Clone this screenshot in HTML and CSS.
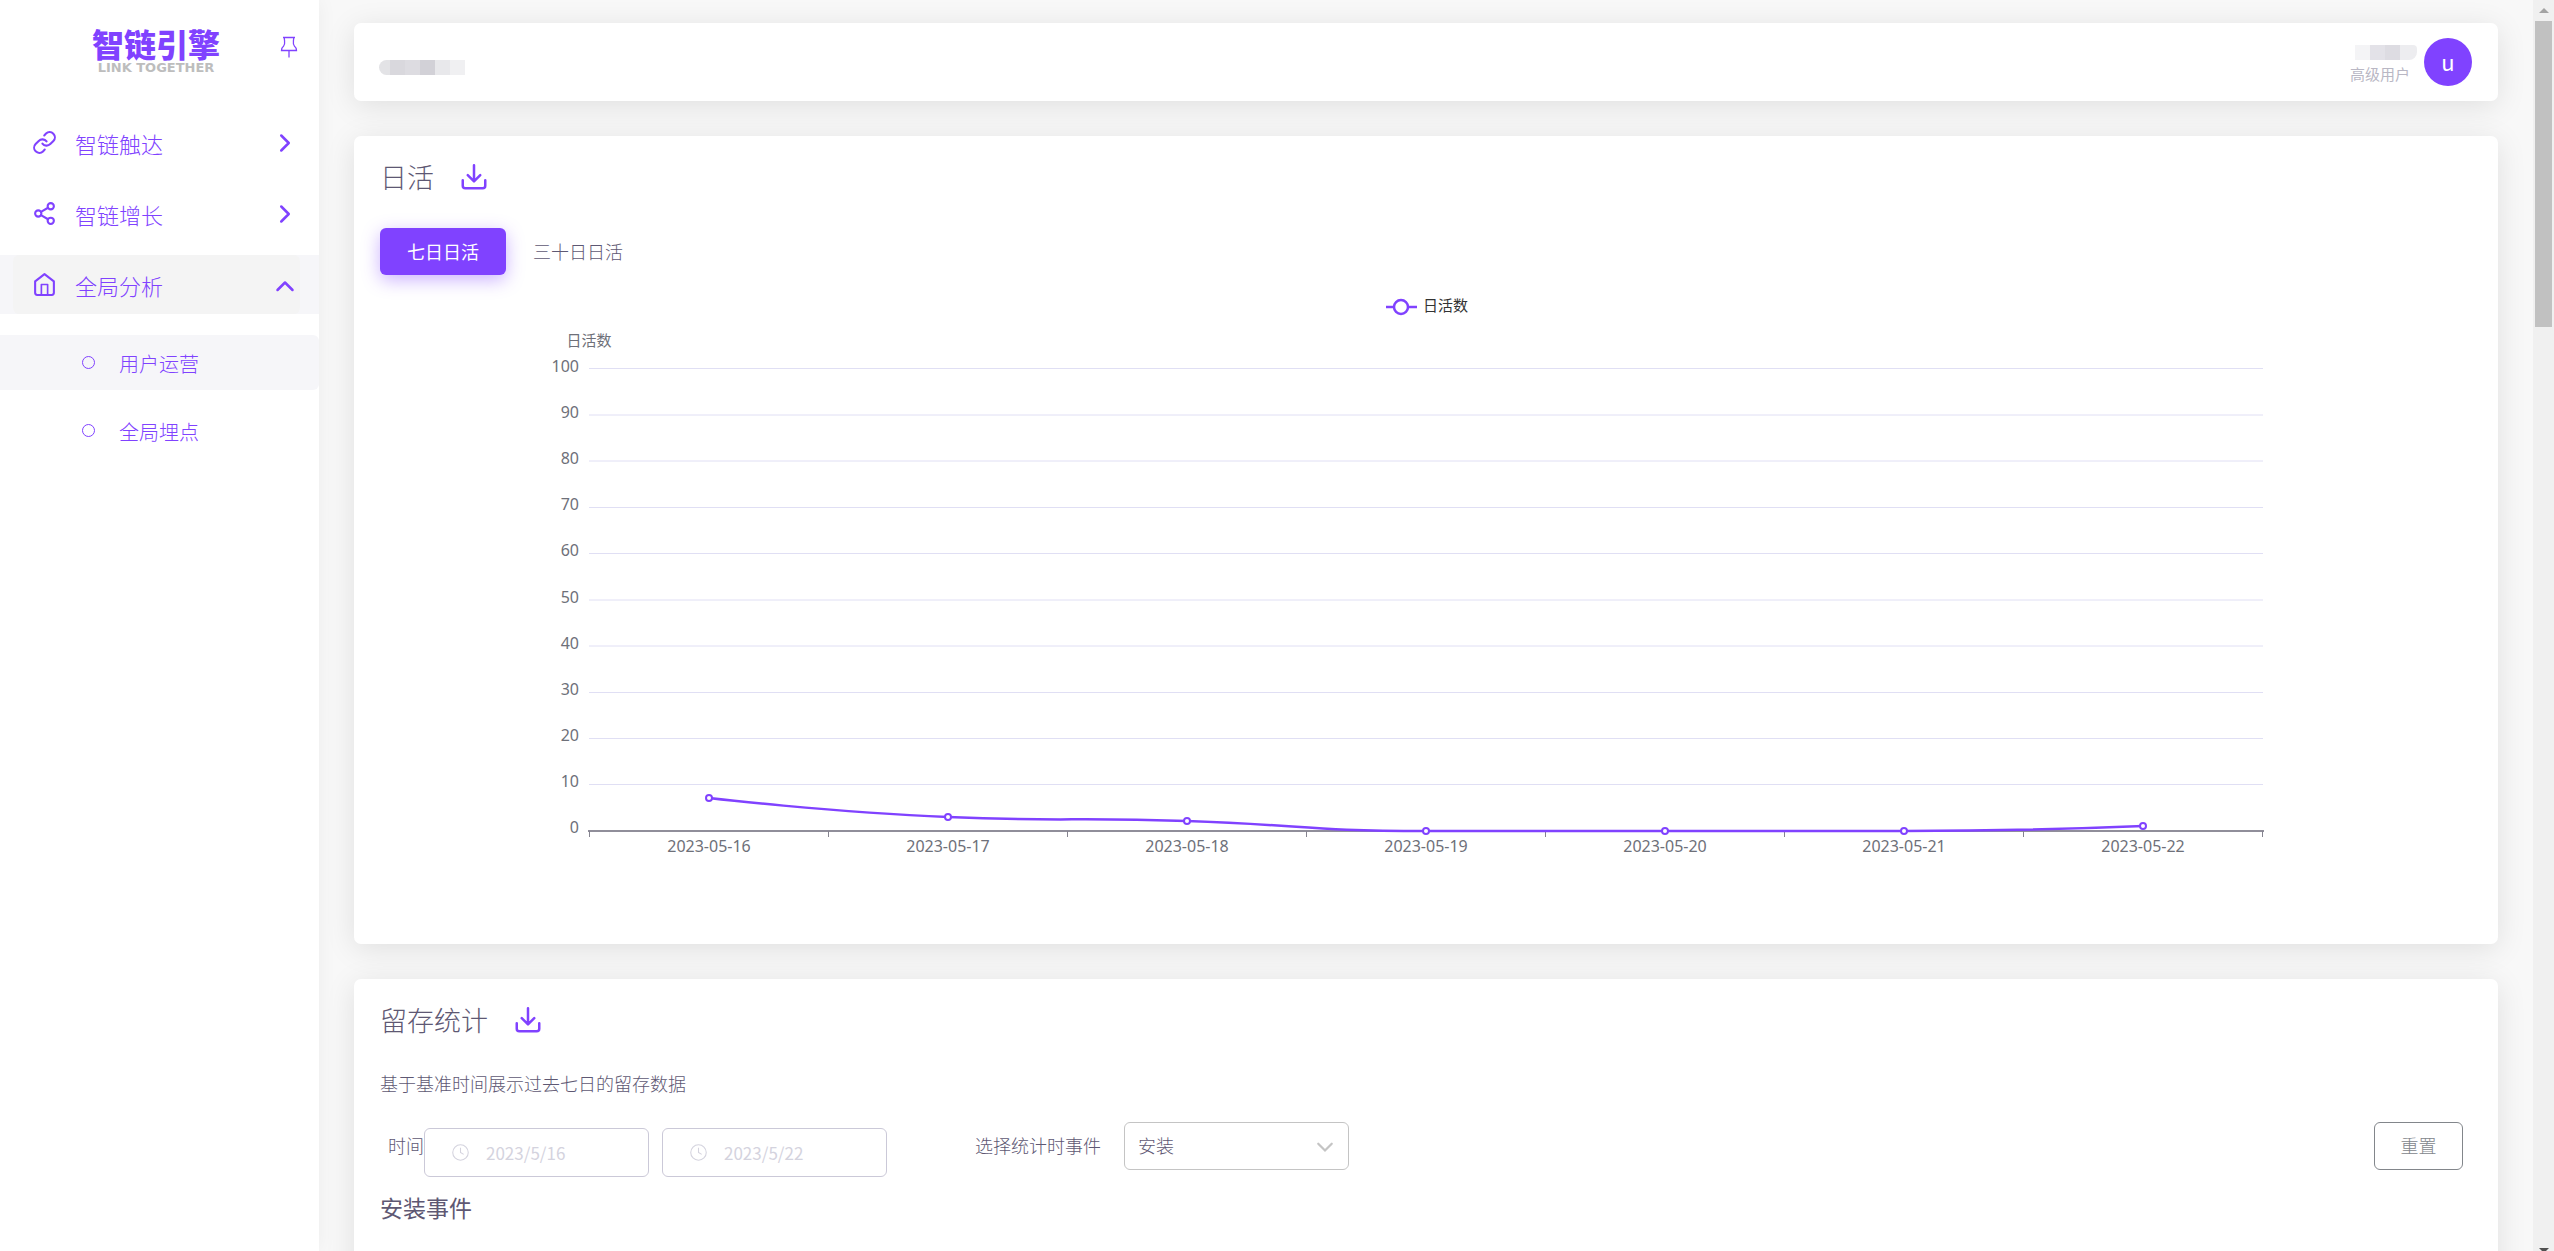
FILE: index.html
```html
<!DOCTYPE html>
<html lang="zh-CN">
<head>
<meta charset="utf-8">
<meta name="viewport" content="width=device-width, initial-scale=1">
<title>智链引擎</title>
<link rel="stylesheet" href="styles.css">
</head>
<body>
<div class="app">
  <aside class="sidebar">
    <div class="brand">
      <a class="logo" href="#"><span class="logo-name">智链引擎</span><span class="logo-sub">LINK TOGETHER</span></a>
      <button class="pin" type="button" aria-label="固定菜单">
        <svg viewBox="0 0 18 22" width="18" height="22" fill="none" stroke="currentColor" stroke-width="1.3"><path d="M3 1.500h12M4.300 1.500C4.300 5.500 5.800 8 3.500 10.200C2.200 11.200 1.500 12 1.500 14.500H16.500C16.500 12 15.800 11.200 14.500 10.200C12.200 8 13.700 5.500 13.700 1.500M9 14.500v7"/></svg>
      </button>
    </div>
    <nav class="menu">
      <a class="menu-row" href="#"><span class="menu-item">
        <svg class="icon" viewBox="0 0 24 24"><path d="M10 13a5 5 0 0 0 7.540.540l3-3a5 5 0 0 0-7.070-7.070l-1.720 1.710"/><path d="M14 11a5 5 0 0 0-7.540-.540l-3 3a5 5 0 0 0 7.070 7.070l1.710-1.710"/></svg>
        <span class="menu-label">智链触达</span>
        <svg class="chevron" viewBox="0 0 24 24"><path d="M9 6l6 6-6 6"/></svg></span></a>
      <a class="menu-row" href="#"><span class="menu-item">
        <svg class="icon" viewBox="0 0 24 24"><circle cx="18" cy="5" r="3"/><circle cx="6" cy="12" r="3"/><circle cx="18" cy="19" r="3"/><path d="M8.600 13.500l6.800 4M15.400 6.500l-6.800 4"/></svg>
        <span class="menu-label">智链增长</span>
        <svg class="chevron" viewBox="0 0 24 24"><path d="M9 6l6 6-6 6"/></svg></span></a>
      <a class="menu-row open" href="#"><span class="menu-item">
        <svg class="icon" viewBox="0 0 24 24"><path d="M3 9l9-7 9 7v11a2 2 0 0 1-2 2H5a2 2 0 0 1-2-2z"/><path d="M9 22V12h6v10" stroke-width="1.600"/></svg>
        <span class="menu-label">全局分析</span>
        <svg class="chevron" viewBox="0 0 24 24"><path d="M6 16l6-6 6 6"/></svg></span></a>
      <div class="submenu">
        <a class="sub-item current" href="#"><span class="dot"></span><span class="sub-label">用户运营</span></a>
        <a class="sub-item" href="#"><span class="dot"></span><span class="sub-label">全局埋点</span></a>
      </div>
    </nav>
  </aside>

  <main class="content">
    <header class="topbar">
      <div class="mosaic mosaic-left"><i></i><i></i><i></i><i></i><i></i><i></i></div>
      <div class="user">
        <div class="user-text">
          <div class="mosaic mosaic-right"><i></i><i></i><i></i><i></i></div>
          <span class="role">高级用户</span>
        </div>
        <button class="avatar" type="button">u</button>
      </div>
    </header>

    <section class="card">
      <div class="card-head">
        <h2>日活</h2>
        <button class="download" type="button" aria-label="下载"><svg viewBox="0 0 24 24"><path d="M3 14.500V19a2 2 0 0 0 2 2h14a2 2 0 0 0 2-2v-4.500M7 10.500l5 5 5-5M12 15V2.500"/></svg></button>
      </div>
      <div class="tabs">
        <button class="tab active" type="button">七日日活</button>
        <button class="tab" type="button">三十日日活</button>
      </div>
      <svg class="chart" viewBox="0 0 2092 620" role="img" aria-label="日活数">
        <g class="legend">
          <path d="M1006 27h31"/><circle cx="1021" cy="27" r="7"/>
          <text x="1043" y="31">日活数</text>
        </g>
        <text class="axis-text middle" x="209" y="66">日活数</text>
        <path class="grid" d="M209 88.500H1883M209 135H1883M209 181H1883M209 227.500H1883M209 273.500H1883M209 320H1883M209 366H1883M209 412.500H1883M209 458.500H1883M209 504.500H1883"/>
        <g class="axis-text digits end">
          <text x="199" y="92">100</text><text x="199" y="138">90</text><text x="199" y="184">80</text><text x="199" y="230">70</text><text x="199" y="276">60</text><text x="199" y="323">50</text><text x="199" y="369">40</text><text x="199" y="415">30</text><text x="199" y="461">20</text><text x="199" y="507">10</text><text x="199" y="553">0</text>
        </g>
        <path class="axis" d="M208 551H1884"/>
        <path class="ticks" d="M209.500 551v6M448.500 551v6M687.500 551v6M926.500 551v6M1165.500 551v6M1404.500 551v6M1643.500 551v6M1882.500 551v6"/>
        <g class="axis-text digits middle">
          <text x="329" y="572">2023-05-16</text><text x="568" y="572">2023-05-17</text><text x="807" y="572">2023-05-18</text><text x="1046" y="572">2023-05-19</text><text x="1285" y="572">2023-05-20</text><text x="1524" y="572">2023-05-21</text><text x="1763" y="572">2023-05-22</text>
        </g>
        <path class="series" d="M329 518C329 518 448 532 568 537C688 542 687 537 807 541C927 545 927 551 1046 551H1524C1644 551 1763 546 1763 546"/>
        <g class="points"><circle cx="329" cy="518" r="3"/><circle cx="568" cy="537" r="3"/><circle cx="807" cy="541" r="3"/><circle cx="1046" cy="551" r="3"/><circle cx="1285" cy="551" r="3"/><circle cx="1524" cy="551" r="3"/><circle cx="1763" cy="546" r="3"/></g>
      </svg>
    </section>

    <section class="card retention">
      <div class="card-head">
        <h2>留存统计</h2>
        <button class="download" type="button" aria-label="下载"><svg viewBox="0 0 24 24"><path d="M3 14.500V19a2 2 0 0 0 2 2h14a2 2 0 0 0 2-2v-4.500M7 10.500l5 5 5-5M12 15V2.500"/></svg></button>
      </div>
      <p class="desc">基于基准时间展示过去七日的留存数据</p>
      <form class="filters">
        <div class="dates">
          <label for="from">时间</label>
          <div class="date-box">
            <svg viewBox="0 0 16 16"><circle cx="8" cy="8" r="7.300"/><path d="M8 3.500V8l3 1.800"/></svg>
            <input id="from" type="text" value="2023/5/16">
          </div>
          <div class="date-box">
            <svg viewBox="0 0 16 16"><circle cx="8" cy="8" r="7.300"/><path d="M8 3.500V8l3 1.800"/></svg>
            <input id="to" type="text" value="2023/5/22" aria-label="结束时间">
          </div>
        </div>
        <div class="event">
          <label for="event">选择统计时事件</label>
          <div class="select-box">
            <select id="event"><option>安装</option></select>
            <svg viewBox="0 0 16 16"><path d="M2 6l6 6 6-6"/></svg>
          </div>
        </div>
        <button class="reset" type="reset">重置</button>
      </form>
      <h3>安装事件</h3>
    </section>
  </main>

  <div class="scrollbar" aria-hidden="true">
    <span class="arrow up"></span>
    <span class="thumb"></span>
    <span class="arrow down"></span>
  </div>
</div>
</body>
</html>
```
FILE: styles.css
```css
:root {
  --primary: #8042ff;
  --text: #5e5873;
  --axis: #6e7079;
}
* { box-sizing: border-box; }
body {
  margin: 0;
  background: #f8f8f8;
  color: var(--text);
  font-family: "Noto Sans CJK SC", sans-serif;
  font-size: 18px;
  font-weight: 300;
}
button, input, select { font: inherit; color: inherit; }
button { padding: 0; border: 0; background: none; cursor: pointer; }
a { color: inherit; text-decoration: none; }
svg { display: block; }

.app { display: flex; height: 100vh; overflow: hidden; }

/* Sidebar */
.sidebar {
  flex: 0 0 319px;
  background: #fff;
  color: var(--primary);
  box-shadow: 0 0 19px rgba(34, 41, 47, .05);
}
.brand {
  display: flex;
  justify-content: flex-end;
  align-items: flex-start;
  height: 113px;
  padding: 27px 21px 0 0;
}
.logo { display: flex; flex-direction: column; align-items: center; gap: 2px; margin-right: 60px; }
.logo-name { font-size: 32px; font-weight: 900; line-height: 32px; }
.logo-sub {
  color: #bdbdbd;
  font-family: "DejaVu Sans", sans-serif;
  font-size: 13px;
  font-weight: 700;
  line-height: 14px;
}
.pin { margin-top: 9px; color: inherit; }
.menu { display: flex; flex-direction: column; gap: 12px; }
.menu-row { display: block; padding: 0 19px 0 13px; }
.menu-item {
  display: flex;
  align-items: center;
  height: 59px;
  padding-left: 19px;
  border-radius: 6px;
  font-size: 22px;
}
.menu-row.open { background: #f6f6f9; }
.open .menu-item { background: #f4f4f4; }
.icon, .chevron, .download svg {
  fill: none;
  stroke: currentColor;
  stroke-width: 2;
  stroke-linecap: round;
  stroke-linejoin: round;
}
.icon { width: 25px; height: 25px; margin-right: 18px; }
.menu-label { flex: 1; }
.chevron { width: 30px; height: 30px; }
.submenu { display: flex; flex-direction: column; gap: 13px; margin-top: 9px; }
.sub-item {
  display: flex;
  align-items: center;
  height: 55px;
  padding-left: 82px;
  border-radius: 0 6px 6px 0;
  font-size: 20px;
}
.sub-label { padding-top: 2px; }
.sub-item.current { background: #f6f6f9; }
.dot {
  width: 13px;
  height: 13px;
  margin-right: 24px;
  border: 1px solid var(--primary);
  border-radius: 50%;
}

/* Page content */
.content {
  display: flex;
  flex: 1;
  flex-direction: column;
  gap: 35px;
  min-width: 0;
  padding: 23px 35px;
  overflow: hidden;
}
.topbar, .card {
  flex: none;
  padding: 0 26px;
  border-radius: 7px;
  background: #fff;
  box-shadow: 0 5px 30px rgba(0, 0, 0, .1);
}
.topbar { display: flex; align-items: center; justify-content: space-between; height: 78px; padding-left: 25px; }
.mosaic { display: flex; overflow: hidden; }
.mosaic i { width: 15px; height: 15px; }
.mosaic-left { margin-top: 10px; border-radius: 8px 0 0 8px; }
.mosaic-left i:nth-child(1) { width: 11px; background: #e3e3e6; }
.mosaic-left i:nth-child(2) { background: #d9d8dd; }
.mosaic-left i:nth-child(3) { background: #dddce1; }
.mosaic-left i:nth-child(4) { background: #d2d1d7; }
.mosaic-left i:nth-child(5) { background: #e8e8eb; }
.mosaic-left i:nth-child(6) { background: #f0f0f2; }
.mosaic-right { margin-left: 5px; border-radius: 0 4px 8px 0; }
.mosaic-right i:nth-child(1) { background: #f4f4f6; }
.mosaic-right i:nth-child(2) { background: #e3e2e8; }
.mosaic-right i:nth-child(3) { background: #dddce2; }
.mosaic-right i:nth-child(4) { width: 17px; background: #ededf0; }
.user { display: flex; align-items: center; }
.user-text { margin-right: 7px; padding-top: 5px; }
.role { display: block; padding-top: 3px; color: #b9b7c4; font-size: 15px; font-weight: 400; line-height: 22px; }
.avatar {
  width: 48px;
  height: 48px;
  padding-bottom: 2px;
  border-radius: 50%;
  background: var(--primary);
  color: #fff;
  font-size: 22px;
  font-weight: 400;
}

/* Cards */
.card-head { display: flex; align-items: center; gap: 25px; height: 82px; }
h2 { margin: 0; padding-bottom: 2px; font-size: 27px; font-weight: 300; }
.download { color: var(--primary); }
.download svg { width: 30px; height: 30px; }
.tabs { display: flex; padding-top: 10px; }
.tab { height: 47px; padding: 0 27px 2px; border-radius: 6px; }
.tab.active {
  background: var(--primary);
  color: #fff;
  font-weight: 400;
  box-shadow: 0 5px 18px rgba(128, 66, 255, .4);
}
.chart { width: 100%; margin-top: 5px; margin-bottom: 44px; font-family: "Noto Sans", "Noto Sans CJK SC", sans-serif; font-size: 15px; font-weight: 400; }
.legend path, .legend circle, .series, .points circle { fill: none; stroke: var(--primary); stroke-width: 2; }
.legend path, .legend circle, .series { stroke-width: 2.5; }
.legend circle, .points circle { fill: #fff; }
.legend text { fill: #333; }
.grid { stroke: #e0dff4; }
.axis { fill: none; stroke: #908e9a; stroke-width: 2; }
.ticks { stroke: #85838f; }
.axis-text { fill: var(--axis); }
.digits { font-size: 16px; }
.middle { text-anchor: middle; }
.end { text-anchor: end; }

/* Retention filters */
.retention { min-height: 640px; }
.desc { margin: 8px 0 24px; line-height: 29px; }
.filters { display: flex; align-items: flex-start; gap: 88px; padding-right: 9px; }
.dates { display: flex; padding: 6px 0 0 8px; }
.dates label { line-height: 34px; }
.date-box {
  display: flex;
  align-items: center;
  gap: 17px;
  width: 225px;
  height: 49px;
  padding-left: 27px;
  border: 1px solid #cbc9d8;
  border-radius: 6px;
  color: #d4d3de;
}
.date-box + .date-box { margin-left: 13px; }
.date-box svg { flex: none; width: 17px; height: 17px; fill: none; stroke: currentColor; }
.date-box input { width: 120px; padding: 0; border: 0; outline: 0; background: none; font-size: 17px; font-weight: 400; }
.event { display: flex; align-items: center; gap: 23px; }
.event label { padding-bottom: 2px; }
.select-box { display: grid; align-items: center; width: 225px; height: 48px; }
.select-box > * { grid-area: 1 / 1; }
.select-box select {
  width: 100%;
  height: 48px;
  padding: 0 13px 2px;
  appearance: none;
  border: 1px solid #c4c4c4;
  border-radius: 6px;
  background: #fff;
}
.select-box svg {
  justify-self: end;
  width: 18px;
  height: 18px;
  margin-right: 15px;
  fill: none;
  stroke: #c4c4c4;
  stroke-width: 2;
  stroke-linecap: round;
  pointer-events: none;
}
.reset {
  width: 89px;
  height: 48px;
  margin-left: auto;
  padding-bottom: 2px;
  border: 1px solid #82868b;
  border-radius: 6px;
  color: #82868b;
}
h3 { margin: 13px 0 0; font-size: 23px; font-weight: 400; line-height: 34px; }

/* Scroll track */
.scrollbar {
  display: flex;
  flex: 0 0 21px;
  flex-direction: column;
  align-items: center;
  background: #f0f0f0;
}
.arrow { display: flex; align-items: center; justify-content: center; height: 21px; }
.arrow::before { content: ""; border: 5px solid transparent; }
.up::before { border-top: 0; border-bottom-color: #a3a3a3; }
.down { height: 3px; margin-top: auto; align-items: flex-start; }
.down::before { border-bottom: 0; border-top-color: #505050; }
.thumb { width: 17px; height: 24.5%; background: #c1c1c1; }
```
